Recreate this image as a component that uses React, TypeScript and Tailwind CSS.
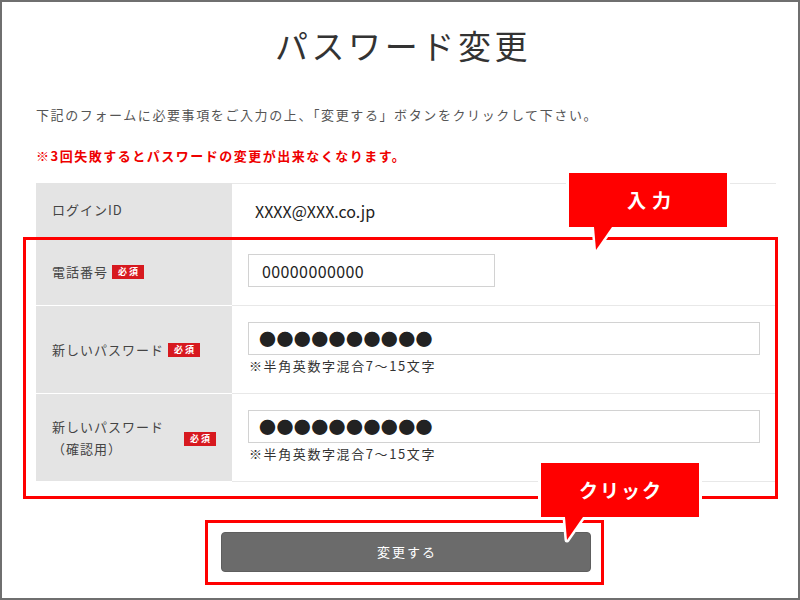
import React from "react";

function Badge({ className = "" }: { className?: string }) {
  return (
    <span
      className={
        "inline-flex h-[14px] w-[32px] items-center justify-center bg-[#d7191f] text-[9px] font-bold leading-none tracking-[2px] pl-[2px] text-white " +
        className
      }
    >
      必須
    </span>
  );
}

function Tail({ className }: { className: string }) {
  return (
    <svg width="28" height="34" viewBox="0 0 28 34" className={"absolute " + className}>
      <polyline points="4,7 6,30 22,7" fill="none" stroke="#ffffff" strokeWidth="5" strokeLinejoin="round" />
      <polygon points="4,2 22,2 22,7 6,30 4,7" fill="#ff0000" />
    </svg>
  );
}

export default function App() {
  const dots = "●●●●●●●●●●";
  return (
    <div className="relative h-[600px] w-[800px] overflow-hidden border-2 border-[#6f6f6f] bg-white font-['Noto_Sans_CJK_JP','Noto_Sans',sans-serif] text-[#333]">
      <div className="pl-[34px] pr-[22px] pt-[23px]">
        <h1 className="text-center text-[33px] font-normal leading-[40px] tracking-[3.6px] pr-[6px] text-[#333]">
          パスワード変更
        </h1>
        <p className="mt-[40px] text-[13px] leading-[20px] tracking-[1.6px] text-[#555]">
          下記のフォームに必要事項をご入力の上、「変更する」ボタンをクリックして下さい。
        </p>
        <p className="mt-[21px] text-[13px] font-bold leading-[20px] tracking-[1.5px] text-[#ee0000]">
          ※3回失敗するとパスワードの変更が出来なくなります。
        </p>

        <div className="mt-[17px]">
          {/* Row 1 */}
          <div className="flex">
            <div className="flex w-[196px] items-center border-b border-white bg-[#e4e4e4] pl-[16px] text-[13px] tracking-[1px] text-[#444]">
              ログインID
            </div>
            <div className="flex h-[55px] flex-1 items-center border-y border-[#e8e8e8] pl-[23px] text-[16px] text-[#222]">
              XXXX@XXX.co.jp
            </div>
          </div>
          {/* Row 2 */}
          <div className="flex">
            <div className="flex w-[196px] items-center border-b border-white bg-[#e4e4e4] pl-[16px] text-[13px] tracking-[1px] text-[#444]">
              <span>電話番号</span>
              <Badge className="ml-[4px]" />
            </div>
            <div className="flex h-[68px] flex-1 items-center border-b border-[#e8e8e8] pl-[16px] pb-[2px]">
              <div className="flex h-[33px] w-[247px] items-center border border-[#d2d2d2] pl-[13px] text-[16px] tracking-[0.4px] text-[#222]">
                00000000000
              </div>
            </div>
          </div>
          {/* Row 3 */}
          <div className="flex">
            <div className="flex w-[196px] items-center border-b border-white bg-[#e4e4e4] pl-[16px] text-[13px] tracking-[1px] text-[#444]">
              <span>新しいパスワード</span>
              <Badge className="ml-[4px]" />
            </div>
            <div className="flex-1 border-b border-[#e8e8e8] pl-[16px] pr-[16px] pt-[16px] pb-[18px]">
              <div className="flex h-[33px] w-full items-center border border-[#d2d2d2] pl-[10px] text-[17px] leading-none tracking-[0.4px] text-[#222]">
                {dots}
              </div>
              <div className="mt-[2px] pl-[1px] text-[13px] leading-[18px] tracking-[1.6px] text-[#333]">
                ※半角英数字混合7〜15文字
              </div>
            </div>
          </div>
          {/* Row 4 */}
          <div className="flex">
            <div className="flex w-[196px] items-center border-b border-white bg-[#e4e4e4] pl-[16px] text-[13px] leading-[22px] tracking-[1px] text-[#444]">
              <div>
                <div>新しいパスワード</div>
                <div>（確認用）</div>
              </div>
              <Badge className="ml-[20px] mt-[2px]" />
            </div>
            <div className="flex-1 border-b border-[#e8e8e8] pl-[16px] pr-[16px] pt-[16px] pb-[18px]">
              <div className="flex h-[33px] w-full items-center border border-[#d2d2d2] pl-[10px] text-[17px] leading-none tracking-[0.4px] text-[#222]">
                {dots}
              </div>
              <div className="mt-[2px] pl-[1px] text-[13px] leading-[18px] tracking-[1.6px] text-[#333]">
                ※半角英数字混合7〜15文字
              </div>
            </div>
          </div>
        </div>

        <div className="mt-[50px] flex justify-center">
          <button className="flex h-[40px] w-[370px] items-center justify-center rounded-[4px] border border-[#5e5e5e] bg-[#6b6b6b] pl-[2px] text-[13px] tracking-[2px] text-white">
            変更する
          </button>
        </div>
      </div>

      {/* Annotations */}
      <div className="absolute left-[21px] top-[235px] h-[262px] w-[755px] border-[3px] border-[#ff0000]" />
      <div className="absolute left-[203px] top-[518px] h-[65px] w-[399px] border-[3px] border-[#ff0000]" />

      <div className="absolute left-[567px] top-[171px] flex h-[54px] w-[158px] items-center justify-center bg-[#ff0000] pl-[8px] text-[19px] font-bold tracking-[6px] text-white shadow-[0_0_0_3px_#ffffff]">
        入力
      </div>
      <Tail className="left-[588px] top-[218px]" />

      <div className="absolute left-[539px] top-[461px] flex h-[54px] w-[158px] items-center justify-center bg-[#ff0000] pl-[2px] text-[19px] font-bold tracking-[2px] text-white shadow-[0_0_0_3px_#ffffff]">
        クリック
      </div>
      <Tail className="left-[559px] top-[508px]" />
    </div>
  );
}
